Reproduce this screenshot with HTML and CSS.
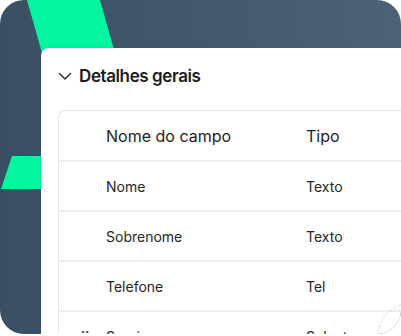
FILE: index.html
```html
<!DOCTYPE html>
<html lang="pt">
<head>
    <meta charset="UTF-8">
    <title>Detalhes gerais</title>
    <link rel="stylesheet" href="styles.css">
</head>
<body>
    <div class="frame">
        <div class="stripe stripe-top"></div>
        <div class="stripe stripe-left"></div>

        <div class="panel">
            <div class="panel-head">
                <svg class="chevron" width="14" height="14" viewBox="0 0 14 14">
                    <path d="M1.5 4.5 L7 10 L12.5 4.5" fill="none" stroke="#333" stroke-width="1.5" stroke-linecap="round" stroke-linejoin="round"/>
                </svg>
                <span>Detalhes gerais</span>
            </div>

            <div class="fields">
                <div class="row head">
                    <span class="grip"></span>
                    <span class="col-name">Nome do campo</span>
                    <span class="col-type">Tipo</span>
                </div>
                <div class="row">
                    <span class="grip"></span>
                    <span class="col-name">Nome</span>
                    <span class="col-type">Texto</span>
                </div>
                <div class="row">
                    <span class="grip"></span>
                    <span class="col-name">Sobrenome</span>
                    <span class="col-type">Texto</span>
                </div>
                <div class="row">
                    <span class="grip"></span>
                    <span class="col-name">Telefone</span>
                    <span class="col-type">Tel</span>
                </div>
                <div class="row">
                    <span class="grip">⠿</span>
                    <span class="col-name">Serviço</span>
                    <span class="col-type">Select</span>
                </div>
            </div>
            <div class="ring"></div>
        </div>
    </div>
</body>
</html>
```

FILE: styles.css
```css
body {
    margin: 0;
    background: #fff;
    font-family: Inter, "Noto Sans", sans-serif;
    color: #1e1e1e;
}
.frame {
    position: relative;
    width: 401px;
    height: 334px;
    padding: 48px 0 0 41px;
    box-sizing: border-box;
    border-radius: 24px;
    background: linear-gradient(90deg, #3a4f63, #4b6277);
    overflow: hidden;
}
.stripe {
    position: absolute;
    background: #04f59f;
}
.stripe-top {
    left: 27px;
    top: 0;
    width: 90px;
    height: 60px;
    clip-path: polygon(0 0, 73px 0, 90px 60px, 17px 60px);
}
.stripe-left {
    left: 0;
    top: 156px;
    width: 50px;
    height: 33px;
    clip-path: polygon(12px 0, 50px 0, 50px 33px, 1px 33px);
}
.panel {
    position: relative;
    z-index: 1;
    height: 100%;
    background: #fff;
    border-radius: 8px 0 0 0;
    box-shadow: 0 0 2px rgba(0, 0, 0, 0.12);
    padding: 18px 0 0 17px;
    box-sizing: border-box;
    overflow: hidden;
}
.panel-head {
    display: flex;
    align-items: center;
    gap: 7px;
    height: 20px;
    margin-bottom: 24px;
    font-size: 17px;
    font-weight: 600;
    letter-spacing: -0.4px;
    color: #1c1c1c;
}
.chevron {
    flex: none;
}
.fields {
    border: 1px solid #e6e6e6;
    border-right: none;
    border-radius: 8px 0 0 0;
}
.row {
    display: flex;
    align-items: center;
    height: 48px;
    border-bottom: 2px solid #ededed;
    font-size: 14px;
    color: #262626;
}
.row.head {
    height: 49px;
    font-size: 16px;
    color: #1e1e1e;
}
.grip {
    width: 47px;
    text-align: center;
    font-size: 14px;
    color: #555;
    padding-left: 4px;
    box-sizing: border-box;
}
.col-name {
    width: 200px;
}
.ring {
    position: absolute;
    right: -48px;
    bottom: -40px;
    width: 70px;
    height: 70px;
    border: 1px dashed #dadada;
    border-radius: 50%;
}
```
